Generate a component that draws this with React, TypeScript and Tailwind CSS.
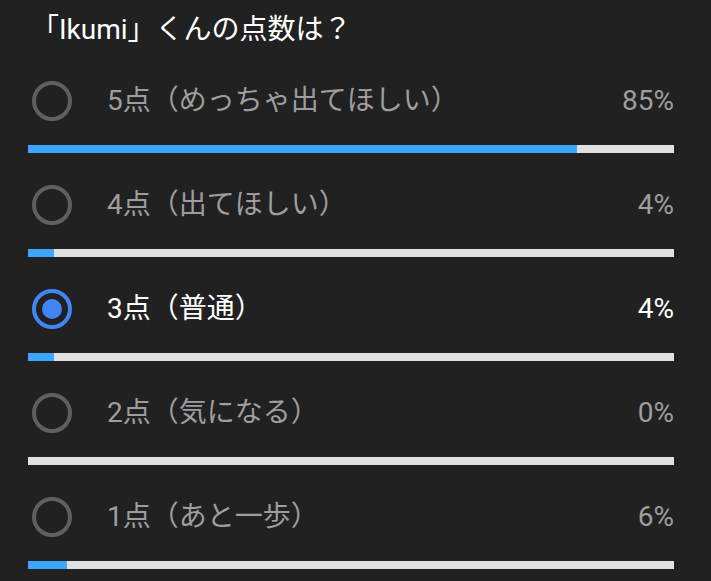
const options = [
  { label: '5点（めっちゃ出てほしい）', percent: 85, selected: false },
  { label: '4点（出てほしい）', percent: 4, selected: false },
  { label: '3点（普通）', percent: 4, selected: true },
  { label: '2点（気になる）', percent: 0, selected: false },
  { label: '1点（あと一歩）', percent: 6, selected: false },
];

function Radio({ checked }: { checked: boolean }) {
  if (checked) {
    return (
      <div className="ml-[4px] w-[40px] h-[40px] shrink-0 rounded-full border-[4px] border-[#4285f4] flex items-center justify-center">
        <div className="w-[20px] h-[20px] rounded-full bg-[#4285f4]" />
      </div>
    );
  }
  return <div className="ml-[4px] w-[40px] h-[40px] shrink-0 rounded-full border-[4px] border-[#5f5f5f]" />;
}

export default function App() {
  return (
    <div
      className="w-[711px] h-[581px] overflow-hidden bg-[#212121] pl-[28px] pr-[37px] pt-[12px]"
      style={{ fontFamily: "Roboto, 'Noto Sans CJK JP', sans-serif" }}
    >
      <div className="pl-[3px] text-[28px] leading-[36px] text-white">「Ikumi」くんの点数は？</div>
      <div className="mt-[33px] flex flex-col gap-[32px]">
        {options.map((opt) => (
          <div key={opt.label}>
            <div className="flex items-center h-[40px]">
              <Radio checked={opt.selected} />
              <span
                className={
                  'ml-[35px] text-[28px] leading-[36px] ' + (opt.selected ? 'text-white' : 'text-[#9e9e9e]')
                }
              >
                {opt.label}
              </span>
              <span
                className={
                  'ml-auto text-[28px] leading-[36px] ' + (opt.selected ? 'text-white' : 'text-[#9e9e9e]')
                }
              >
                {opt.percent}%
              </span>
            </div>
            <div className="mt-[24px] h-[8px] bg-[#e0e0e0]">
              <div className="h-full bg-[#3ea6ff]" style={{ width: `${opt.percent}%` }} />
            </div>
          </div>
        ))}
      </div>
    </div>
  );
}
